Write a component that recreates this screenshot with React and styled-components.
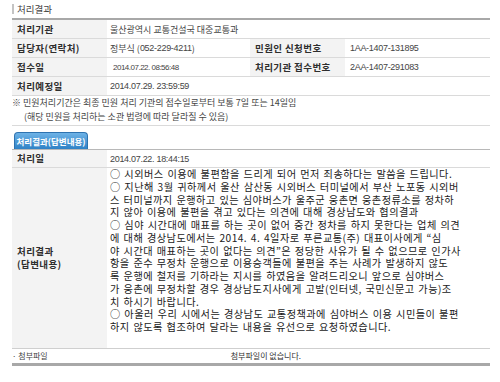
import React from 'react'
import styled, { createGlobalStyle } from 'styled-components'

const GlobalStyle = createGlobalStyle`
  body {
    margin: 0;
    background: #fff;
    font-family: "Noto Sans CJK KR", "Noto Sans", sans-serif;
    color: #333;
  }
`

const Page = styled.div`
  width: 500px;
  box-sizing: border-box;
  padding: 0 10px 0 12px;
`

const SectionTitle = styled.div`
  height: 18px;
  display: flex;
  align-items: center;
  gap: 3px;
  font-size: 9.5px;
  color: #444;
  &::before {
    content: '';
    width: 2px;
    height: 10px;
    background: #c4c4c4;
  }
`

const Table = styled.div`
  border-top: 2px solid #a8a8a8;
`

const Row = styled.div`
  display: grid;
  grid-template-columns: ${p => (p.$split ? '95px 143px 95px 1fr' : '95px 1fr')};
  height: ${p => p.$h || 18}px;
  border-bottom: 1px solid #dadada;
`

const Label = styled.div`
  background: #f3f3f3;
  display: flex;
  align-items: center;
  padding-left: 5px;
  font-size: 9.5px;
  font-weight: 700;
  letter-spacing: 0.4px;
  color: #2e2e2e;
  line-height: 13px;
`

const Value = styled.div`
  display: flex;
  align-items: center;
  padding-left: ${p => p.$pad || 3}px;
  font-size: 9px;
  color: #444;
  white-space: nowrap;
`

const Num = styled.span`
  font-family: "Liberation Sans", sans-serif;
  font-size: ${p => p.$size || 9}px;
  letter-spacing: ${p => p.$ls || -0.3}px;
  color: #444;
`

const Note = styled.div`
  padding: 0 0 1px 0;
  font-size: 9px;
  line-height: 14px;
  color: #444;
  border-bottom: 1px solid #dadada;
  white-space: nowrap;
  span {
    display: block;
  }
  span + span {
    padding-left: 12px;
  }
`

const TabBar = styled.div`
  margin-top: 6px;
  padding-left: 2px;
  border-bottom: 1px solid #b8b8b8;
  display: flex;
`

const Tab = styled.div`
  width: 74px;
  height: 17px;
  box-sizing: border-box;
  border: 1px solid #2e73b0;
  border-bottom: none;
  border-radius: 4px 4px 0 0;
  background: linear-gradient(#6db2e6, #2f82c6);
  color: #fff;
  font-size: 8.5px;
  font-weight: 700;
  display: flex;
  align-items: center;
  justify-content: center;
`

const Answer = styled.div`
  display: grid;
  grid-template-columns: 95px 1fr;
  border-bottom: 1px solid #cfcfcf;
`

const AnswerText = styled.div`
  padding: 0 0 14px 3px;
  font-size: 10.2px;
  line-height: 12.75px;
  letter-spacing: 0.45px;
  word-spacing: 1px;
  color: #222;
  white-space: nowrap;
`

const Attach = styled.div`
  display: flex;
  align-items: center;
  height: 14px;
  border-bottom: 3px solid #a8a8a8;
  font-size: 8px;
  color: #444;
  span:last-child {
    margin-left: 183px;
    color: #333;
  }
`

const answerLines = [
  '○ 시외버스 이용에 불편함을 드리게 되어 먼저 죄송하다는 말씀을 드립니다.',
  '○ 지난해 3월 귀하께서 울산 삼산동 시외버스 터미널에서 부산 노포동 시외버',
  '스 터미널까지 운행하고 있는 심야버스가 울주군 웅촌면 웅촌정류소를 정차하',
  '지 않아 이용에 불편을 겪고 있다는 의견에 대해 경상남도와 협의결과',
  '○ 심야 시간대에 매표를 하는 곳이 없어 중간 정차를 하지 못한다는 업체 의견',
  '에 대해 경상남도에서는 2014. 4. 4일자로 푸른교통(주) 대표이사에게 “심',
  '야 시간대 매표하는 곳이 없다는 의견”은 정당한 사유가 될 수 없으므로 인가사',
  '항을 준수 무정차 운행으로 이용승객들에 불편을 주는 사례가 발생하지 않도',
  '록 운행에 철저를 기하라는 지시를 하였음을 알려드리오니 앞으로 심야버스',
  '가 웅촌에 무정차할 경우 경상남도지사에게 고발(인터넷, 국민신문고 가능)조',
  '치 하시기 바랍니다.',
  '○ 아울러 우리 시에서는 경상남도 교통정책과에 심야버스 이용 시민들이 불편',
  '하지 않도록 협조하여 달라는 내용을 유선으로 요청하였습니다.',
]

export default function App() {
  return (
    <Page>
      <GlobalStyle />
      <SectionTitle>처리결과</SectionTitle>
      <Table>
        <Row>
          <Label>처리기관</Label>
          <Value>울산광역시 교통건설국 대중교통과</Value>
        </Row>
        <Row $split>
          <Label>담당자(연락처)</Label>
          <Value>정부식 (<Num>052-229-4211</Num>)</Value>
          <Label>민원인 신청번호</Label>
          <Value $pad={5}><Num>1AA-1407-131895</Num></Value>
        </Row>
        <Row $split>
          <Label>접수일</Label>
          <Value $pad={6}><Num $size={8} $ls={-0.5}>2014.07.22. 08:56:48</Num></Value>
          <Label>처리기관 접수번호</Label>
          <Value $pad={5}><Num>2AA-1407-291083</Num></Value>
        </Row>
        <Row>
          <Label>처리예정일</Label>
          <Value><Num $size={9} $ls={-0.3}>2014.07.29. 23:59:59</Num></Value>
        </Row>
      </Table>
      <Note>
        <span>※ 민원처리기간은 최종 민원 처리 기관의 접수일로부터 보통 7일 또는 14일임</span>
        <span>(해당 민원을 처리하는 소관 법령에 따라 달라질 수 있음)</span>
      </Note>
      <TabBar>
        <Tab>처리결과(답변내용)</Tab>
      </TabBar>
      <Row $h={17}>
        <Label>처리일</Label>
        <Value><Num $size={9} $ls={-0.3}>2014.07.22. 18:44:15</Num></Value>
      </Row>
      <Answer>
        <Label>처리결과<br />(답변내용)</Label>
        <AnswerText>
          {answerLines.map((line, i) => (
            <div key={i}>{line}</div>
          ))}
        </AnswerText>
      </Answer>
      <Attach>
        <span>· 첨부파일</span>
        <span>첨부파일이 없습니다.</span>
      </Attach>
    </Page>
  )
}
